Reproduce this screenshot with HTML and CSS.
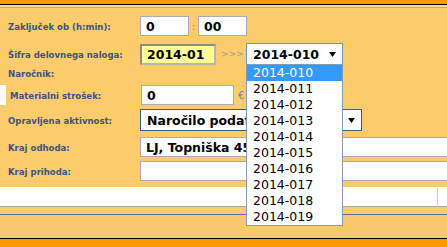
FILE: index.html
```html
<!DOCTYPE html>
<html lang="sl">
<head>
  <meta charset="UTF-8">
  <title>Delovni nalog</title>
  <link rel="stylesheet" href="styles.css">
</head>
<body>
  <div class="top-bar"></div>
  <div class="top-rule"></div>

  <div class="order-form">
    <div class="row row-time">
      <span class="lbl">Zaključek ob (h:min):</span>
      <span class="field short">0</span>
      <span class="sep">:</span>
      <span class="field short">00</span>
    </div>

    <div class="row row-code">
      <span class="lbl">Šifra delovnega naloga:</span>
      <span class="field code">2014-01</span>
      <span class="arrows">&gt;&gt;&gt;</span>
      <div class="combo open">
        <span class="combo-text">2014-010</span>
        <svg class="caret" width="7" height="5" viewBox="0 0 7 5"><polygon points="0,0 7,0 3.5,5" fill="#000"/></svg>
        <ul class="droplist">
          <li class="selected">2014-010</li>
          <li>2014-011</li>
          <li>2014-012</li>
          <li>2014-013</li>
          <li>2014-014</li>
          <li>2014-015</li>
          <li>2014-016</li>
          <li>2014-017</li>
          <li>2014-018</li>
          <li>2014-019</li>
        </ul>
      </div>
    </div>

    <div class="row row-client">
      <span class="lbl">Naročnik:</span>
    </div>

    <div class="row row-cost">
      <span class="stub"></span>
      <span class="lbl">Materialni strošek:</span>
      <span class="field money">0</span>
      <span class="currency">€</span>
    </div>

    <div class="row row-activity">
      <span class="lbl">Opravljena aktivnost:</span>
      <div class="combo wide">
        <span class="combo-text">Naročilo podatkov</span>
        <svg class="caret" width="7" height="5" viewBox="0 0 7 5"><polygon points="0,0 7,0 3.5,5" fill="#000"/></svg>
      </div>
    </div>

    <div class="row row-place">
      <span class="lbl">Kraj odhoda:</span>
      <span class="field long">LJ, Topniška 45</span>
    </div>

    <div class="row row-place">
      <span class="lbl">Kraj prihoda:</span>
      <span class="field long"></span>
    </div>

    <div class="row row-note">
      <span class="field full"><span class="btn-edge"></span></span>
    </div>
  </div>

  <div class="footer"></div>
  <div class="bottom-bar"></div>
</body>
</html>
```

FILE: styles.css
```css
html, body {
    height: 247px;
    overflow: hidden;
}
body {
    margin: 0;
    background-color: #fccb6b;
    font-family: "DejaVu Sans", Verdana, sans-serif;
    display: flex;
    flex-direction: column;
}
.top-bar {
    height: 4px;
    background-color: #ff9900;
    border-bottom: 1px solid #000;
}
.top-rule {
    height: 2px;
    background-color: #fdd590;
    border-bottom: 1px solid #a4abc3;
}

.row {
    display: flex;
    align-items: center;
    height: 20px;
    margin-top: 4px;
    padding-left: 8px;
    white-space: nowrap;
}
.row-time { margin-top: 8px; }
.row-code { margin-top: 7px; height: 22px; }
.row-client { margin-top: 0; height: 16px; }
.row-cost { padding-left: 0; }
.row-activity { height: 22px; }
.row-place { overflow: hidden; }
.row-activity + .row-place { margin-top: 6px; }
.row-note { margin-top: 6px; padding-left: 0; }

.lbl {
    flex: none;
    width: 132px;
    font-family: "DejaVu Sans Condensed", "DejaVu Sans", sans-serif;
    font-weight: bold;
    font-size: 9.5px;
    color: #3f5381;
}
.row-cost .lbl { width: 130px; }

.field {
    flex: none;
    box-sizing: border-box;
    display: flex;
    align-items: center;
    height: 20px;
    padding: 0 5px;
    background-color: #fff;
    border: 1px solid #a5acb2;
    font-weight: bold;
    font-size: 12.5px;
    color: #000;
    overflow: hidden;
}
.field.short { width: 49px; }
.field.code {
    width: 76px;
    height: 21px;
    padding-left: 5px;
    background-color: #ffff99;
    border: 2px solid #b4b4b4;
    border-top-color: #8c8c8c;
    border-left-color: #8c8c8c;
}
.field.money { width: 93px; margin-left: 1px; }
.field.long { width: 330px; }
.field.full {
    width: 100%;
    padding: 0;
    border: none;
    border-bottom: 1px solid #a8a8a8;
    justify-content: flex-end;
}
.btn-edge {
    width: 9px;
    height: 18px;
    border-left: 1px solid #cfcfcf;
}

.sep {
    width: 9px;
    text-align: center;
    font-size: 10px;
    color: #8a8a8a;
}
.arrows {
    width: 25px;
    padding-left: 5px;
    font-size: 9px;
    color: #9a9a9a;
}
.currency {
    margin-left: 4px;
    font-size: 10px;
    color: #6d7fa3;
}
.stub {
    width: 6px;
    height: 20px;
    margin-right: 4px;
    background-color: #fff;
}

.combo {
    position: relative;
    flex: none;
    box-sizing: border-box;
    display: flex;
    align-items: center;
    justify-content: space-between;
    height: 22px;
    padding: 0 6px;
    background-color: #fff;
    border: 1px solid #7096c4;
    font-weight: bold;
    font-size: 12.5px;
    color: #000;
}
.combo.open { width: 97px; }
.combo.wide {
    width: 222px;
    border-color: #2b5f99;
}
.combo-text { overflow: hidden; }
/* the open list covers the rest of this text */
.combo.wide .combo-text { width: 99px; }
.caret { flex: none; }

.droplist {
    position: absolute;
    top: 100%;
    left: -1px;
    z-index: 5;
    width: 97px;
    box-sizing: border-box;
    margin: 0;
    padding: 0;
    list-style: none;
    background-color: #fff;
    border: 1px solid #7f9db9;
}
.droplist li {
    height: 16px;
    line-height: 16px;
    padding-left: 6px;
    font-weight: normal;
    font-size: 12.5px;
    color: #000;
}
.droplist li.selected {
    background-color: #3399ff;
    color: #fff;
}

.footer {
    margin-top: 7px;
    height: 23px;
    background-color: #f7c870;
    border-top: 1px solid #5b6e97;
    border-bottom: 1px solid #000;
}
.bottom-bar {
    flex: 1;
    background-color: #ff9900;
}
```
